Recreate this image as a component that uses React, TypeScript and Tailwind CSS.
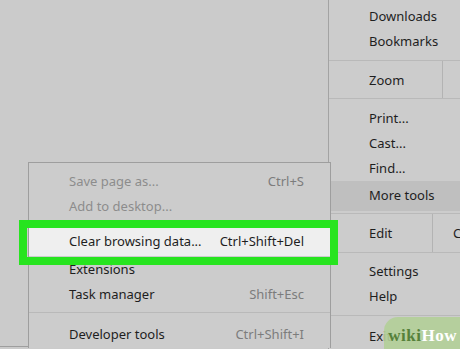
const font = { fontFamily: '"Noto Sans", "Open Sans", sans-serif' };

type Item = { label: string; hint?: string; muted?: boolean };

const MainRow = ({ label, highlight }: { label: string; highlight?: boolean }) => (
  <div className={`h-[25px] flex items-center pl-[40px] ${highlight ? 'bg-[#bdbdbd]' : ''}`}>
    <span className="text-[13px] text-[#1e1e1e]">{label}</span>
  </div>
);

const SubRow = ({ label, hint, muted }: Item) => (
  <div className="h-[25px] flex items-center justify-between pl-[40px] pr-[26px]">
    <span className={`text-[13px] ${muted ? 'text-[#8c8c8c]' : 'text-[#1e1e1e]'}`}>{label}</span>
    {hint && <span className="text-[13px] text-[#7c7c7c]">{hint}</span>}
  </div>
);

export default function App() {
  return (
    <div className="relative w-[460px] h-[349px] overflow-hidden bg-[#cbcbcb]" style={font}>
      <div className="flex h-full">
        {/* page area */}
        <div className="w-[328px] shrink-0" />

        {/* chrome main menu */}
        <div className="flex-1 border-l border-[#a3a3a3] bg-[#cccccc] pt-[4px]">
          <MainRow label="Downloads" />
          <MainRow label="Bookmarks" />
          <div className="mt-[6px] border-t border-[#b9b9b9] h-[38px] flex">
            <div className="w-[114px] flex items-center pl-[40px] pt-[3px] border-r border-[#b3b3b3]">
              <span className="text-[13px] text-[#1e1e1e]">Zoom</span>
            </div>
          </div>
          <div className="border-t border-[#b9b9b9] pt-[7px]">
            <MainRow label="Print..." />
            <MainRow label="Cast..." />
            <MainRow label="Find..." />
            <div className="h-[30px] flex items-center pl-[40px] bg-[#bfbfbf]">
              <span className="text-[13px] text-[#1e1e1e]">More tools</span>
            </div>
          </div>
          <div className="mt-[2px] border-t border-[#b9b9b9] h-[39px] flex">
            <div className="w-[104px] flex items-center pl-[40px] pt-[2px] border-r border-[#b3b3b3]">
              <span className="text-[13px] text-[#1e1e1e]">Edit</span>
            </div>
            <div className="flex items-center pl-[20px] pt-[2px]">
              <span className="text-[13px] text-[#1e1e1e]">Copy</span>
            </div>
          </div>
          <div className="border-t border-[#b9b9b9] pt-[6px]">
            <MainRow label="Settings" />
            <MainRow label="Help" />
          </div>
          <div className="mt-[6px] border-t border-[#b9b9b9] pt-[8px]">
            <MainRow label="Exit" />
          </div>
        </div>
      </div>

      {/* More tools submenu */}
      <div className="absolute left-[28px] top-[162px] w-[303px] h-[186px] bg-[#cccccc] border-l border-t border-r border-[#9e9e9e] pt-[6px]">
        <SubRow label="Save page as..." hint="Ctrl+S" muted />
        <SubRow label="Add to desktop..." muted />
        <div className="h-[9px]" />
        <div className="h-[28px] flex items-center justify-between pl-[40px] pr-[26px] bg-[#efefef]">
          <span className="text-[13px] text-[#1e1e1e]">Clear browsing data...</span>
          <span className="text-[13px] text-[#1e1e1e]">Ctrl+Shift+Del</span>
        </div>
        <div className="pt-[1px]">
          <SubRow label="Extensions" />
          <SubRow label="Task manager" hint="Shift+Esc" />
        </div>
        <div className="mt-[5px] mb-[9px] border-t border-[#b9b9b9]" />
        <SubRow label="Developer tools" hint="Ctrl+Shift+I" />
      </div>
      <div className="absolute left-0 bottom-[2px] w-[28px] border-t border-[#9e9e9e]" />

      {/* green callout frame */}
      <div className="absolute left-[19px] top-[220px] w-[319px] h-[45px] border-[8px] border-[#27e41f]" />

      {/* wikiHow watermark */}
      <div className="absolute right-0 bottom-0 w-[76px] h-[32px] bg-[#b3cf98]/90 rounded-tl-[14px] flex items-center justify-end pr-[3px] pt-[4px]">
        <span className="text-[17px] font-bold leading-none tracking-[0.5px]" style={{ fontFamily: '"Liberation Serif", serif' }}>
          <span className="text-[#55813a]">wiki</span>
          <span className="text-white">How</span>
        </span>
      </div>
    </div>
  );
}
